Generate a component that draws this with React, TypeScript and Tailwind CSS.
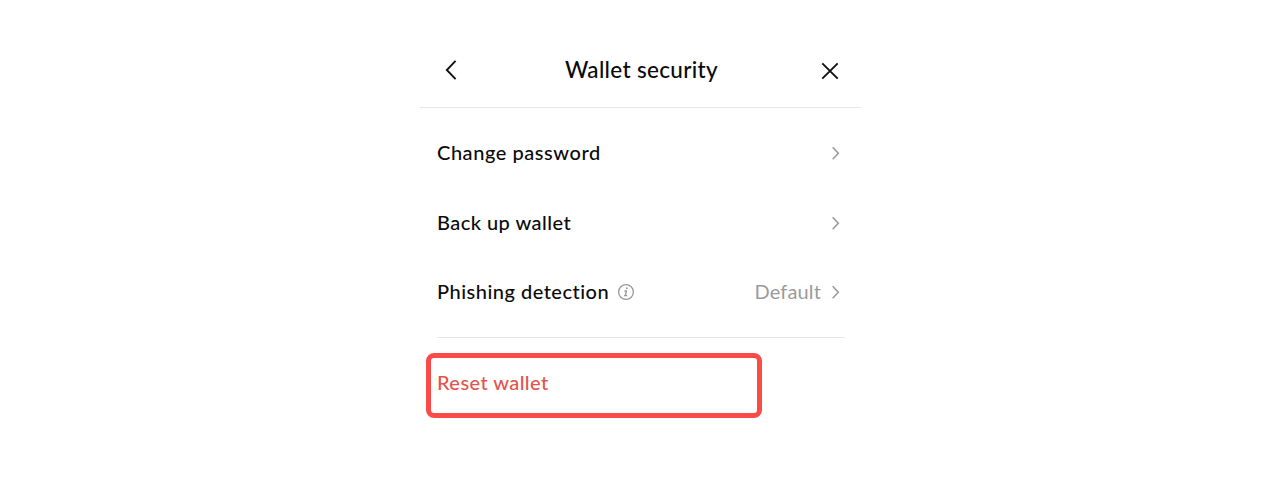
import type { ReactNode } from 'react';

function ChevronRight() {
  return (
    <svg width="10" height="16" viewBox="0 0 10 16" fill="none" stroke="#9a9a9a" strokeWidth="1.6" className="shrink-0">
      <path d="M1.7 2.2 L7.3 8.2 L1.7 14.2" />
    </svg>
  );
}

function InfoIcon() {
  return (
    <svg width="18" height="18" viewBox="0 0 18 18" fill="none" stroke="#999999" className="ml-[8px] shrink-0">
      <circle cx="9" cy="9" r="7.4" strokeWidth="1.3" />
      <circle cx="9.8" cy="5.3" r="1" fill="#999999" stroke="none" />
      <path d="M7.4 8 H9.4 L8.4 12.7 M7 12.7 H10.2" strokeWidth="1.3" />
    </svg>
  );
}

function Row({ label, children }: { label: ReactNode; children?: ReactNode }) {
  return (
    <div className="flex h-[70px] items-center justify-between pl-[17px] pr-5 last:h-[68px]">
      <div className="flex items-center">{label}</div>
      <div className="flex items-center">
        {children}
        <ChevronRight />
      </div>
    </div>
  );
}

export default function App() {
  return (
    <div className="flex h-[494px] justify-center overflow-hidden bg-white pt-8 pl-px font-['Lato','Noto_Sans',sans-serif] text-xl leading-6 font-medium text-[#0b0b0b]">
      <main className="w-[441px]">
        <header className="flex h-[76px] items-center justify-between border-b border-[#e6e6e6] pl-[24px] pr-[22px]">
          <svg width="14" height="22" viewBox="0 0 14 22" fill="none" stroke="#111111" strokeWidth="1.9">
            <path d="M11.6 1.8 L2.8 11 L11.6 20.2" />
          </svg>
          <h1 className="ml-1 text-[22.5px] leading-7 tracking-[0.32px] whitespace-nowrap">Wallet security</h1>
          <svg width="18" height="18" viewBox="0 0 18 18" fill="none" stroke="#111111" strokeWidth="1.9" className="mt-0.5">
            <path d="M1.3 1.3 L16.7 16.7 M16.7 1.3 L1.3 16.7" />
          </svg>
        </header>
        <section className="pt-[10px]">
          <Row label={<span className="pb-[2px] tracking-[0.55px]">Change password</span>} />
          <Row label={<span className="pb-[2px] tracking-[0.45px]">Back up wallet</span>} />
          <Row label={<><span className="pb-[2px] tracking-[0.49px]">Phishing detection</span><InfoIcon /></>}>
            <span className="mr-[10px] pb-[2px] font-normal tracking-[0.15px] text-[#9b9b9b]">Default</span>
          </Row>
        </section>
        <div className="mt-[11px] mr-4 ml-[17px] h-px bg-[#e6e6e6]" />
        <button className="mt-[15px] ml-[6px] flex h-[65px] w-[336px] items-start rounded-lg border-5 border-[#fa4b49] pt-[12px] pl-[6px] text-[#e5534b]">
          <span className="tracking-[0.42px]">Reset wallet</span>
        </button>
      </main>
    </div>
  );
}
